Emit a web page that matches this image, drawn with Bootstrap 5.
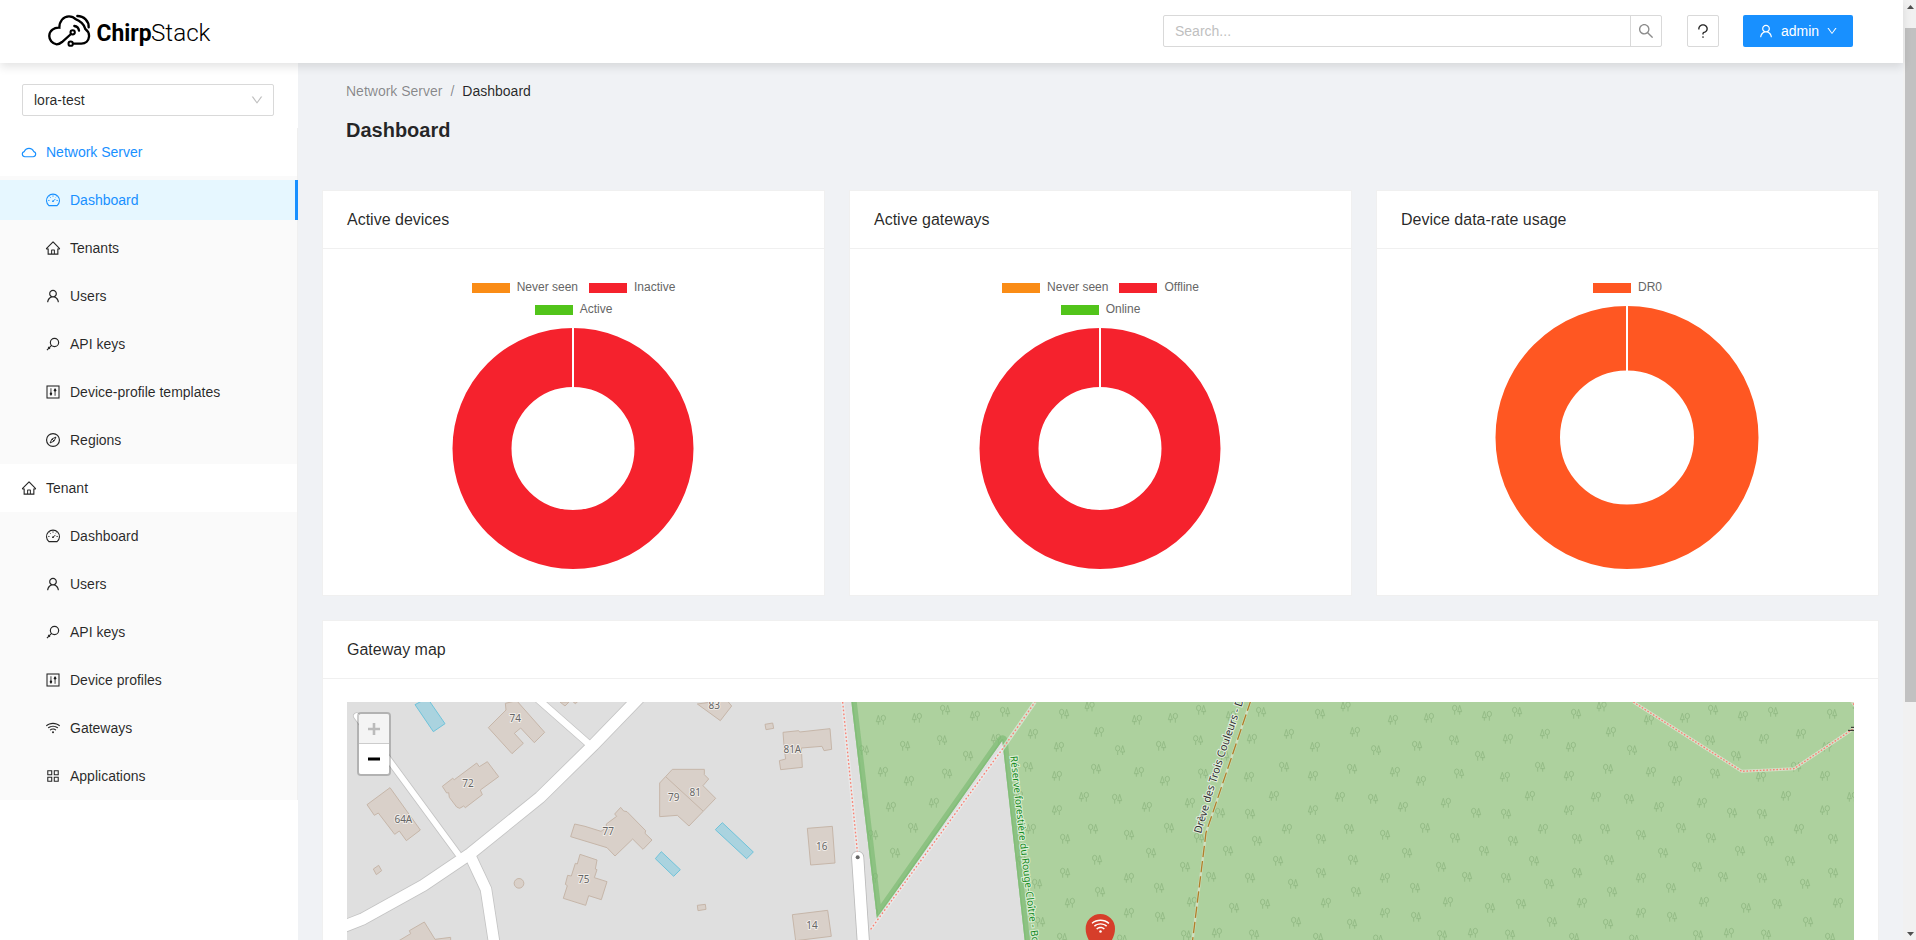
<!DOCTYPE html>
<html lang="en">
<head>
<meta charset="utf-8">
<title>ChirpStack</title>
<link href="https://cdn.jsdelivr.net/npm/bootstrap@5.3.0/dist/css/bootstrap.min.css" rel="stylesheet">
<style>
body{font-family:"Liberation Sans",Arial,sans-serif;font-size:14px;line-height:22px;color:rgba(0,0,0,.85);background:#f0f2f5;height:940px;overflow:hidden}
.ic{width:16px;height:16px;margin:0 -1px;fill:currentColor;flex:none;display:block}
.topbar{height:63px;flex:none;padding:0 50px 0 48px;box-shadow:0 4px 9px rgba(0,0,0,.11);z-index:5;position:relative}
.boxed{border:1px solid #d9d9d9;border-radius:2px;background:#fff}
.search{width:499px;height:32px}
.search .hint{color:#bfbfbf;padding-left:11px}
.search .go{width:31px;border-left:1px solid #d9d9d9;color:#8c8c8c}
.help{width:32px;height:32px;margin-left:25px;margin-right:24px}
.user{width:110px;height:32px;border-radius:2px;background:#1890ff;color:#fff;gap:8px}
.sider{width:298px;background:#fff;flex:none}
.tenant-pick{height:32px;width:252px;margin:21px 0 12px 22px;padding:0 10px 0 11px}
.menu{border-right:1px solid #f0f0f0}
.menu .head{height:48px;padding-left:22px;gap:10px}
.menu .sub{background:#fafafa}
.menu .sub a{height:40px;margin:4px 0;padding-left:46px;gap:10px;color:inherit;text-decoration:none}
.menu .sub a.on{background:#e6f7ff;color:#1890ff;border-right:3px solid #1890ff;margin-right:-1px}
.blue{color:#1890ff}
.main{padding:0 24px}
.crumbs{padding:17px 0 0 24px;color:rgba(0,0,0,.45)}
.crumbs b{font-weight:400;color:rgba(0,0,0,.85)}
.ttl{font-size:20px;font-weight:700;line-height:32px;margin:12px 0 44px 24px;color:rgba(0,0,0,.85)}
.panel{border:1px solid #f0f0f0;background:#fff}
.panel h2{font-size:16px;font-weight:400;line-height:25px;padding:16px 24px;margin:0;border-bottom:1px solid #f0f0f0}
.charts{gap:24px}
.charts .panel{flex:1 1 0;height:406px}
.legend{padding-top:27px;margin-bottom:8px;font-size:12px;color:#666}
.legend>div{height:22px;gap:11px}
.key{gap:7px;display:flex;align-items:center}
.key i{width:38px;height:10px;margin-top:1px}
.mapwrap{margin:23px 24px 0;height:238px;position:relative;overflow:hidden;background:#dfdfdf}
.mapwrap>svg{display:block}
.zoomer{position:absolute;left:10px;top:10px;border:2px solid rgba(0,0,0,.2);border-radius:4px;background-clip:padding-box;overflow:hidden}
.zoomer div{width:30px;height:30px;background:#fff;display:flex;align-items:center;justify-content:center}
.zoomer div:first-child{background:#f4f4f4;border-bottom:1px solid #ccc}
.sbar{width:13px;background:#f1f1f1;flex:none}
.sbar i{width:11px;height:674px;background:#c1c1c1}
</style>
<script src="https://cdn.jsdelivr.net/npm/bootstrap@5.3.0/dist/js/bootstrap.bundle.min.js"></script>
</head>
<body class="d-flex m-0">
<svg class="d-none">
<symbol id="user" viewBox="0 0 1024 1024"><path d="M858.5 763.6a374 374 0 00-80.6-119.5 375.63 375.63 0 00-119.5-80.6c-.4-.2-.8-.3-1.2-.5C719.5 518 760 444.7 760 362c0-137-111-248-248-248S264 225 264 362c0 82.7 40.5 156 102.8 201.1-.4.2-.8.3-1.2.5-44.8 18.9-85 46-119.5 80.6a375.63 375.63 0 00-80.6 119.5A371.7 371.7 0 00136 901.8a8 8 0 008 8.2h60c4.400 0 7.900-3.500 8-7.800 2-77.200 33-149.500 87.800-204.300 56.700-56.700 132-87.900 212.200-87.900s155.500 31.200 212.200 87.900C779 752.700 810 825 812 902.200c.1 4.400 3.600 7.800 8 7.800h60a8 8 0 008-8.200c-1-47.800-10.900-94.300-29.500-138.200zM512 534c-45.900 0-89.100-17.900-121.600-50.400S340 407.900 340 362c0-45.900 17.900-89.100 50.400-121.600S466.100 190 512 190s89.100 17.900 121.600 50.400S684 316.100 684 362c0 45.900-17.900 89.100-50.400 121.600S557.900 534 512 534z"/></symbol>
<symbol id="home" viewBox="0 0 1024 1024"><path d="M946.5 505L560.1 118.800l-25.900-25.900a31.500 31.500 0 00-44.400 0L77.500 505a63.900 63.900 0 00-18.800 46c.4 35.200 29.700 63.300 64.900 63.300h42.500V940h691.800V614.300h43.400c17.100 0 33.200-6.700 45.300-18.800a63.600 63.600 0 0018.700-45.300c0-17-6.700-33.100-18.800-45.200zM568 868H456V664h112v204zm217.900-325.700V868H632V640c0-22.100-17.900-40-40-40H432c-22.100 0-40 17.900-40 40v228H238.100V542.300h-96l370-369.700 23.100 23.100L882 542.300h-96.100z"/></symbol>
<symbol id="search" viewBox="0 0 1024 1024"><path d="M909.6 854.5L649.9 594.8C690.2 542.7 712 479 712 412c0-80.200-31.300-155.400-87.900-212.100-56.600-56.700-132-87.900-212.100-87.900s-155.500 31.300-212.100 87.900C143.200 256.500 112 331.800 112 412c0 80.100 31.300 155.500 87.900 212.100C256.500 680.800 331.800 712 412 712c67 0 130.600-21.800 182.700-62l259.700 259.600a8.200 8.200 0 0011.600 0l43.600-43.500a8.200 8.200 0 000-11.600zM570.400 570.400C528 612.700 471.800 636 412 636s-116-23.300-158.400-65.600C211.300 528 188 471.800 188 412s23.300-116.100 65.600-158.400C296 211.300 352.200 188 412 188s116.100 23.200 158.400 65.600S636 352.200 636 412s-23.300 116.100-65.600 158.400z"/></symbol>
<symbol id="down" viewBox="0 0 1024 1024"><path d="M884 256h-75c-5.100 0-9.900 2.500-12.900 6.600L512 654.200 227.900 262.600c-3-4.100-7.800-6.600-12.900-6.600h-75c-6.500 0-10.300 7.400-6.500 12.700l352.600 486.100c12.800 17.600 39 17.600 51.700 0l352.600-486.100c3.900-5.300.1-12.700-6.400-12.700z"/></symbol>
<symbol id="help" viewBox="0 0 1024 1024"><path d="M764 280.900c-14-30.600-33.900-58.100-59.300-81.600C653.100 151.400 584.600 125 512 125s-141.100 26.400-192.700 74.200c-25.400 23.600-45.300 51-59.300 81.700-14.600 32-22 65.900-22 100.900v27c0 6.200 5 11.200 11.200 11.200h54c6.200 0 11.200-5 11.200-11.200v-27c0-99.500 88.600-180.400 197.600-180.400s197.600 80.900 197.600 180.400c0 40.800-14.500 79.200-42 111.200-27.200 31.700-65.600 54.400-108.100 64-24.300 5.500-46.200 19.200-61.700 38.800a110.850 110.850 0 00-23.900 68.600v31.400c0 6.200 5 11.200 11.200 11.200h54c6.200 0 11.200-5 11.200-11.200v-31.400c0-15.700 10.900-29.500 26-32.900 58.400-13.200 111.400-44.700 149.300-88.700 19.100-22.300 34-47.100 44.300-74 10.700-27.900 16.100-57.200 16.100-87 0-35-7.400-69-22-100.900z"/><circle cx="512" cy="852" r="48"/></symbol>
<symbol id="wifi" viewBox="0 0 1024 1024"><path d="M723 620.500C666.800 571.600 593.400 542 513 542s-153.800 29.600-210.100 78.600a8.100 8.100 0 00-.8 11.200l36 42.900c2.900 3.400 8 3.800 11.400.9C393.100 637.200 450.300 614 513 614s119.900 23.200 163.500 61.500c3.400 2.900 8.500 2.500 11.400-.9l36-42.900c2.800-3.300 2.400-8.300-.9-11.200zm117.400-140.100C751.700 406.500 637.600 362 513 362s-238.700 44.500-327.500 118.400a8.050 8.050 0 00-1 11.300l36 42.900c2.800 3.400 7.900 3.800 11.200 1C308 472.200 406.100 434 513 434s205 38.200 281.200 101.600c3.400 2.800 8.400 2.400 11.200-1l36-42.900c2.800-3.400 2.400-8.500-1-11.300zm116.700-139C835.700 241.800 680.300 182 511 182c-168.200 0-322.600 59-443.700 157.400a8 8 0 00-1.100 11.400l36 42.900c2.800 3.300 7.800 3.800 11.100 1.100C222 306.300 360.300 254 511 254c151.800 0 291 53.500 400 142.700 3.400 2.800 8.400 2.300 11.200-1.100l36-42.900c2.900-3.400 2.400-8.500-1.100-11.300z"/><circle cx="512" cy="778" r="64"/></symbol>
<symbol id="cloud" viewBox="0 0 1024 1024"><path fill="none" stroke="currentColor" stroke-width="72" d="M248 812H776A164 164 0 0 0 816 489A325 325 0 0 0 208 489A164 164 0 0 0 248 812z"/></symbol>
<symbol id="dash" viewBox="0 0 1024 1024"><path fill="none" stroke="currentColor" stroke-width="70" d="M250 870A415 415 0 1 1 774 870z"/><path fill="none" stroke="currentColor" stroke-width="60" d="M512 215v85M300 300l62 62M724 300l-40 40M205 540h85M734 540h85M500 610l165-165"/><circle cx="512" cy="585" r="56"/></symbol>
<symbol id="keyic" viewBox="0 0 1024 1024"><g fill="none" stroke="currentColor" stroke-width="76"><circle cx="608" cy="416" r="266"/><path d="M420 604L125 899M205 705l112 112"/></g></symbol>
<symbol id="control" viewBox="0 0 1024 1024"><g fill="none" stroke="currentColor" stroke-width="68"><rect x="128" y="128" width="768" height="768"/><path d="M380 270v484M644 270v484" stroke-width="56"/></g><circle cx="380" cy="620" r="80"/><circle cx="644" cy="400" r="80"/></symbol>
<symbol id="compass" viewBox="0 0 1024 1024"><g fill="none" stroke="currentColor"><circle cx="512" cy="512" r="412" stroke-width="74"/><path stroke-width="60" d="M700 324L580 580L324 700L444 444zM444 444L580 580"/></g></symbol>
<symbol id="apps" viewBox="0 0 1024 1024"><path fill="none" stroke="currentColor" stroke-width="68" d="M178 178h252v252H178zM594 178h252v252H594zM178 594h252v252H178zM594 594h252v252H594z"/></symbol>
</svg>
<div class="flex-grow-1 d-flex flex-column" style="min-width:0">
<header class="topbar bg-white d-flex align-items-start">
 <svg width="166" height="50" viewBox="0 0 166 50" class="me-auto">
  <g transform="translate(-48 0) scale(.33333)" fill="none" stroke="#000" stroke-width="7" stroke-linecap="round">
   <path d="M213 102L186 126C180 131 176 133 170 133A25 25 0 0 1 148 106C149 92 162 82 178 83C178 64 190 49 207 49C217 49 222 52 228 58C238 61 254 74 256 87C264 93 268 101 267 110C266 122 257 131 244 131H220"/>
   <path d="M232 48C252 48 267 64 266 82M223 78C231 79 236 84 237 92"/>
   <circle cx="218" cy="97" r="6.500" stroke-width="6"/><circle cx="212" cy="131" r="6.500" stroke-width="6"/>
  </g>
  <text x="48.500" y="41" font-family="Roboto,sans-serif" font-size="24" font-weight="700" textLength="55" lengthAdjust="spacingAndGlyphs">Chirp</text>
  <text x="103" y="41" font-family="Roboto,sans-serif" font-size="24" font-weight="300" textLength="59.500" lengthAdjust="spacingAndGlyphs">Stack</text>
 </svg>
 <div class="d-flex" style="margin-top:15px">
  <div class="search boxed d-flex align-items-center"><span class="hint flex-grow-1">Search...</span><span class="go d-flex align-items-center justify-content-center align-self-stretch"><svg class="ic" style="width:18px;height:18px"><use href="#search"/></svg></span></div>
  <div class="help boxed d-flex align-items-center justify-content-center"><svg class="ic" style="width:18px;height:18px"><use href="#help"/></svg></div>
  <div class="user d-flex align-items-center justify-content-center"><svg class="ic"><use href="#user"/></svg><span>admin</span><svg class="ic" style="width:12px;height:12px"><use href="#down"/></svg></div>
 </div>
</header>
<div class="d-flex flex-grow-1" style="min-height:0">
<aside class="sider">
 <div class="tenant-pick boxed d-flex align-items-center justify-content-between"><span>lora-test</span><svg class="ic" style="width:14px;height:14px;color:#bfbfbf"><use href="#down"/></svg></div>
 <nav class="menu">
  <div class="head blue d-flex align-items-center"><svg class="ic"><use href="#cloud"/></svg>Network Server</div>
  <div class="sub d-flex flex-column">
   <a class="on d-flex align-items-center"><svg class="ic"><use href="#dash"/></svg>Dashboard</a>
   <a class="d-flex align-items-center"><svg class="ic"><use href="#home"/></svg>Tenants</a>
   <a class="d-flex align-items-center"><svg class="ic"><use href="#user"/></svg>Users</a>
   <a class="d-flex align-items-center"><svg class="ic"><use href="#keyic"/></svg>API keys</a>
   <a class="d-flex align-items-center"><svg class="ic"><use href="#control"/></svg>Device-profile templates</a>
   <a class="d-flex align-items-center"><svg class="ic"><use href="#compass"/></svg>Regions</a>
  </div>
  <div class="head d-flex align-items-center"><svg class="ic"><use href="#home"/></svg>Tenant</div>
  <div class="sub d-flex flex-column">
   <a class="d-flex align-items-center"><svg class="ic"><use href="#dash"/></svg>Dashboard</a>
   <a class="d-flex align-items-center"><svg class="ic"><use href="#user"/></svg>Users</a>
   <a class="d-flex align-items-center"><svg class="ic"><use href="#keyic"/></svg>API keys</a>
   <a class="d-flex align-items-center"><svg class="ic"><use href="#control"/></svg>Device profiles</a>
   <a class="d-flex align-items-center"><svg class="ic"><use href="#wifi"/></svg>Gateways</a>
   <a class="d-flex align-items-center"><svg class="ic"><use href="#apps"/></svg>Applications</a>
  </div>
 </nav>
</aside>
<main class="main flex-grow-1" style="min-width:0">
 <div class="crumbs">Network Server<span class="mx-2">/</span><b>Dashboard</b></div>
 <h1 class="ttl">Dashboard</h1>
 <div class="charts d-flex">
  <section class="panel"><h2>Active devices</h2>
   <div class="legend"><div class="d-flex justify-content-center"><span class="key"><i style="background:#fa8c16"></i>Never seen</span><span class="key"><i style="background:#f5222d"></i>Inactive</span></div><div class="d-flex justify-content-center"><span class="key"><i style="background:#52c41a"></i>Active</span></div></div>
   <svg class="d-block mx-auto" width="243" height="241" viewBox="-121 -120.500 243 241"><circle r="91" fill="none" stroke="#f5222d" stroke-width="59"/><path d="M0-121V-60" stroke="#fff" stroke-width="2"/></svg>
  </section>
  <section class="panel"><h2>Active gateways</h2>
   <div class="legend"><div class="d-flex justify-content-center"><span class="key"><i style="background:#fa8c16"></i>Never seen</span><span class="key"><i style="background:#f5222d"></i>Offline</span></div><div class="d-flex justify-content-center"><span class="key"><i style="background:#52c41a"></i>Online</span></div></div>
   <svg class="d-block mx-auto" width="243" height="241" viewBox="-121 -120.500 243 241"><circle r="91" fill="none" stroke="#f5222d" stroke-width="59"/><path d="M0-121V-60" stroke="#fff" stroke-width="2"/></svg>
  </section>
  <section class="panel"><h2>Device data-rate usage</h2>
   <div class="legend"><div class="d-flex justify-content-center"><span class="key"><i style="background:#ff5722"></i>DR0</span></div></div>
   <svg class="d-block mx-auto" width="265" height="263" viewBox="-132 -131.500 265 263"><circle r="99.250" fill="none" stroke="#ff5722" stroke-width="64.500"/><path d="M0-132V-65" stroke="#fff" stroke-width="2"/></svg>
  </section>
 </div>
 <section class="panel mt-4 border-bottom-0"><h2>Gateway map</h2>
  <div class="mapwrap">
   <svg width="1507" height="238" viewBox="0 0 4521 714" font-family="Noto Sans,sans-serif">
    <defs>
     <g id="t1" fill="none" stroke="#91b883" stroke-width="2.600"><path d="M-8-13L-14 6H-2zM-8 6V15M7 4V15"/><ellipse cx="7" cy="-5" rx="6.500" ry="8"/></g>
     <g id="t2" fill="none" stroke="#91b883" stroke-width="2.600"><path d="M8-13L14 6H2zM8 6V15M-7 4V15"/><ellipse cx="-7" cy="-5" rx="6.500" ry="8"/></g>
     <clipPath id="wood"><path id="woodp" d="M1513 0L1590 650L1966 116L2041 786H4521V0z"/></clipPath>
     <path id="lane" d="M2562 396L2596 277L2634 156L2699-30"/>
     <path id="resv" d="M1990 163L2017 410L2055 720L2065 800"/>
    </defs>
    <!-- woodland -->
    <use href="#woodp" fill="#add19e"/>
    <g id="trees" clip-path="url(#wood)"></g>
    <g clip-path="url(#wood)" fill="none" stroke="#7cba73" stroke-linejoin="round"><path d="M1511-20L1590 650L1966 116L2048 850" stroke-opacity=".65" stroke-width="32"/><path d="M1511-20L1590 650L1966 116L2048 850" stroke-opacity=".6" stroke-width="9"/></g>
    <!-- streets -->
    <g transform="translate(-21 -36)" fill="none" stroke-linecap="round" stroke-linejoin="round">
     <g stroke="#c4c4c4"><path stroke-width="22" d="M50 78L354 492"/><path stroke-width="24" d="M585 20L744 160"/><path stroke-width="39" d="M-20 722L70 686L250 586L391 491L600 322L760 165L910 10"/><path stroke-width="37" d="M391 498L438 598L475 840"/></g>
     <g stroke="#fff"><path stroke-width="17" d="M50 78L354 492"/><path stroke-width="20" d="M585 20L744 160"/><path stroke-width="34" d="M-20 722L70 686L250 586L391 491L600 322L760 165L910 10"/><path stroke-width="32" d="M391 498L438 598L475 840"/></g>
    </g>
    <g transform="translate(1059 -36)">
     <path d="M473 502L497 860" stroke="#bbb" stroke-width="39" stroke-linecap="round"/><path d="M473 502L497 860" stroke="#fff" stroke-width="34" stroke-linecap="round"/><circle cx="473" cy="502" r="6" fill="#666"/>
     <g fill="none"><path d="M428 36L472 484M512 718L908 176L1005 36" stroke="#eee" stroke-opacity=".6" stroke-width="11"/><path d="M428 36L472 484M512 718L908 176L1005 36" stroke="#fa8072" stroke-width="4" stroke-dasharray="5 6.500"/></g>
    </g>
    <g transform="translate(3429 -426)" fill="none"><path d="M430 426L755 634L912 626L1092 505M1084 422L1096 440" stroke="#dde3d0" stroke-opacity=".85" stroke-width="9"/><path d="M430 426L755 634L912 626L1092 505M1084 422L1096 440" stroke="#fa8072" stroke-width="4" stroke-dasharray="5 5"/><path d="M1083 502H1096M1074 511H1096" stroke="#222" stroke-width="3"/></g>
    <g transform="translate(2199 -36)" fill="none"><path d="M513 30L378 428L328 830" stroke="#d9e2c8" stroke-opacity=".8" stroke-width="7"/><path d="M513 30L378 428L328 830" stroke="#b0802a" stroke-width="4" stroke-dasharray="34 12"/></g>
    <!-- buildings and pools -->
    <g transform="translate(-21 -36)" fill="#d9d0c9" stroke="#c6b6a9" stroke-width="3">
     <path d="M498 60L496 40L530 32L614 127L583 158L542 114L523 130L550 160L516 191L445 113z"/>
     <path d="M307 289L338 265L343 269L410 219L418 230L442 215L476 260L421 300L427 314L376 353L371 348L359 355L350 351L328 322L326 308L320 309z"/>
     <path d="M81 344L150 293L241 420L199 452L178 423L164 433L115 369L103 376z"/>
     <path d="M704 402L735 409L783 424L799 413V402L830 379L824 372L842 352L851 363L861 365L917 422L915 430L936 450L909 478L878 447L825 498L801 473L692 440z"/>
     <path d="M720 493L771 510L766 537L771 539L763 563L801 575L784 629L746 617L737 646L670 625L682 587L676 583L683 556L694 558L706 520L712 522z"/>
     <path d="M959 279L997 238H1093V254L1106 267L1089 287L1127 325L1047 408L1012 376L959 380zM978 261L1089 363"/>
     <path d="M100 537L116 526L125 542L109 554z"/><circle cx="537" cy="580" r="14.500"/><path d="M1072 646L1096 643L1098 658L1074 662z"/>
     <path d="M660 36L675 48L687 36zM700 36L706 41L712 36z"/>
     <path d="M170 756L212 731L208 722L253 696L285 748L332 742V840H170z"/>
    </g>
    <g transform="translate(1059 -36)" fill="#d9d0c9" stroke="#c6b6a9" stroke-width="3">
     <path d="M-8 42L61 92L95 48L80 30z"/><path d="M195 103L218 99L221 115L198 119z"/>
     <path d="M249 127L296 122L299 126L390 116L395 178L372 182L366 169L304 174L307 232L242 239L238 212L257 207L253 180z"/>
     <path d="M322 415L397 409L405 519L332 525z"/><path d="M277 674L383 661L394 739L287 752z"/>
    </g>
    <g fill="#aad3df" stroke="#6fc3da" stroke-width="3"><path transform="translate(-21 -36)" d="M225 44L262 24L315 101L280 125zM964 485L1021 539L1001 559L946 506z"/><path transform="translate(1059 -36)" d="M67 398L160 486L140 506L46 419z"/></g>
    <g font-size="30" fill="#666" text-anchor="middle" stroke="#f0ece8" stroke-width="6" stroke-linejoin="round" paint-order="stroke">
     <text x="505" y="60">74</text><text x="363" y="254">72</text><text x="169" y="363">64A</text><text x="784" y="400">77</text><text x="710" y="544">75</text><text x="980" y="297">79</text><text x="1045" y="281">81</text>
     <text x="1102" y="22">83</text><text x="1336" y="153">81A</text><text x="1424" y="443">16</text><text x="1395" y="682">14</text>
    </g>
    <text font-size="32" fill="#333" stroke="#e4efe0" stroke-width="6" paint-order="stroke"><textPath href="#lane">Drève des Trois Couleurs - D</textPath></text>
    <text font-size="30" fill="#148a1e" stroke="#dcefd6" stroke-width="6" paint-order="stroke"><textPath href="#resv">Réserve forestière du Rouge-Cloître - Bo</textPath></text>
    <!-- gateway pin -->
    <path d="M2260 636A44 44 0 0 1 2304 680C2304 712 2280 730 2260 786C2240 730 2216 712 2216 680A44 44 0 0 1 2260 636z" fill="#d63e2a"/>
    <svg x="2230" y="642" width="61" height="61" fill="#fff"><use href="#wifi"/></svg>
   </svg>
   <div class="zoomer"><div><svg width="12" height="12"><path d="M6 0V12M0 6H12" stroke="#bbb" stroke-width="2.600"/></svg></div><div><svg width="12" height="12"><path d="M0 6H12" stroke="#000" stroke-width="3"/></svg></div></div>
  </div>
 </section>
</main>
</div>
</div>
<div class="sbar d-flex flex-column align-items-end"><svg width="11" height="28"><path d="M2 9L5.500 5L9 9z" fill="#505050"/></svg><i></i><svg class="mt-auto" width="11" height="12"><path d="M2 4L5.500 8L9 4z" fill="#505050"/></svg></div>
<script>
// The wood texture repeats every 256px; x, y, kind (1: conifer first, 2: conifer last)
const T=[[797,49,1],[543,65,2],[720,71,2],[1131,59,2],[1221,77,1],[939,89,1],[1047,83,1],[627,131,1],[516,146,1],[825,125,1],[705,170,1],[888,180,2],[1011,167,2],[1122,150,2],[1200,197,2],[612,230,2],[816,236,2],[507,260,1],[699,257,1],[945,245,1],[1137,250,2],[1023,272,1],[582,317,1],[780,320,1],[879,326,2],[969,350,1],[1098,338,1],[699,360,1],[510,371,2],[1188,368,2],[621,416,1],[807,416,2],[1035,413,2],[531,452,2],[723,446,2],[915,434,2],[1125,443,2],[1212,482,2],[594,512,2],[819,509,2],[981,488,2],[1083,530,2],[723,548,2],[510,563,2],[915,563,1],[1161,560,2],[639,581,2],[828,605,2],[1005,593,2],[555,641,2],[738,638,1],[1104,635,1],[1230,653,2],[648,695,2],[816,701,2],[915,668,1],[1008,680,2],[522,733,2],[714,743,2],[894,748,2],[1086,735,2],[1179,728,1]];
let s='';
for(let k=-2;k<3;k++)for(const [x,y,t] of T)s+=`<use href="#t${t}" x="${x+2199+768*k}" y="${y-36}"/>`;
document.getElementById('trees').innerHTML=s;
</script>
</body>
</html>
